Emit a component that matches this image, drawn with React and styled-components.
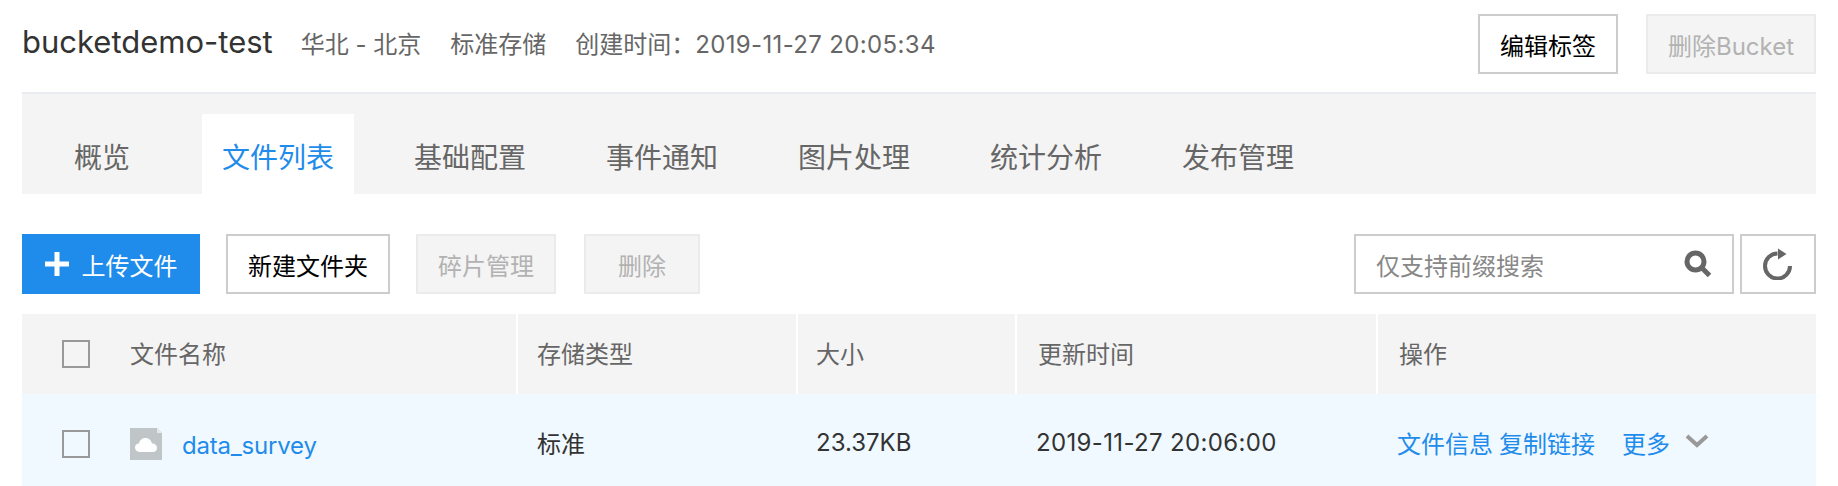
import React from 'react';
import styled, {createGlobalStyle} from "styled-components";

const GlobalStyle = createGlobalStyle`
  html, body {
    margin: 0;
    padding: 0;
    height: 486px;
    overflow: hidden;
    background: #fff;
  }

  body {
    font-family: "Inter", "Noto Sans CJK SC", sans-serif;
  }

  * {
    box-sizing: border-box;
  }
`;

const Page = styled.div`
  padding: 0 22px;
  height: 486px;
  overflow: hidden;
`;

const Header = styled.header`
  display: flex;
  align-items: center;
  height: 94px;
  padding-bottom: 4px;
  border-bottom: 2px solid #e8ebf0;
`;

const Title = styled.h1`
  margin: 0 28px 6px 0;
  font-size: 31px;
  font-weight: 400;
  color: #333;
`;

const Meta = styled.span`
  margin: 0 29px 4px 0;
  font-size: 24px;
  color: #666;
`;

const Digits = styled.span`
  letter-spacing: 0.35px;
`;

const Spacer = styled.div`
  flex: 1;
`;

const Button = styled.button`
  display: inline-flex;
  align-items: center;
  justify-content: center;
  height: 60px;
  width: ${({width}) => width}px;
  margin-left: ${({gap}) => gap || 0}px;
  padding: 0;
  font: inherit;
  font-size: 24px;
  color: #000;
  background: #fff;
  border: 2px solid #ccc;
  border-radius: 0;

  &:disabled {
    color: #b2b2b2;
    background: #f4f4f4;
    border-color: #ebebeb;
  }
`;

const PrimaryButton = styled(Button)`
  gap: 13px;
  color: #fff;
  background: #1f8ceb;
  border-color: #1f8ceb;
`;

const Tabs = styled.nav`
  display: flex;
  align-items: flex-end;
  height: 100px;
  padding-left: 32px;
  background: #f4f4f4;
`;

const Tab = styled.a`
  display: flex;
  align-items: center;
  justify-content: center;
  height: 80px;
  padding-top: 4px;
  width: ${({first}) => first ? '96px' : '152px'};
  margin-right: ${({first}) => first ? '52px' : '40px'};
  font-size: 28px;
  color: ${({active}) => active ? '#1f8ceb' : '#666'};
  background: ${({active}) => active ? '#fff' : 'transparent'};
`;

const Toolbar = styled.div`
  display: flex;
  align-items: center;
  height: 60px;
  margin: 40px 0 20px;
`;

const SearchBox = styled.div`
  display: flex;
  align-items: center;
  justify-content: space-between;
  width: 380px;
  height: 60px;
  padding: 0 20px;
  font-size: 24px;
  color: #888;
  border: 2px solid #ccc;
`;

const TableRow = styled.div`
  display: grid;
  grid-template-columns: 496px 280px 219px 361px 1fr;
  height: ${({head}) => head ? '80px' : '92px'};
  background: ${({head}) => head ? '#f4f4f4' : '#f0f9ff'};
  font-size: 24px;
  color: ${({head}) => head ? '#666' : '#333'};
`;

const HeadCell = styled.div`
  display: flex;
  align-items: center;
  padding: 0 0 4px ${({pad}) => pad || 21}px;
  border-right: ${({last}) => last ? 'none' : '2px solid #fff'};
`;

const Cell = styled.div`
  display: flex;
  align-items: center;
  padding: 5px 0 0 ${({pad}) => pad || 19}px;
`;

const HeadName = styled(HeadCell)`
  padding-left: 40px;
`;

const NameCell = styled(Cell)`
  padding: 8px 0 0 40px;
`;

const Checkbox = styled.span`
  display: inline-block;
  flex: none;
  width: 28px;
  height: 28px;
  margin-right: 40px;
  border: 2px solid #999;
  position: relative;
  top: ${({head}) => head ? '2px' : '0'};
`;

const Link = styled.a`
  color: #1f8ceb;
  margin-right: ${({gap}) => gap || 0}px;
`;

const FileName = styled(Link)`
  margin: 2px 0 0 20px;
  letter-spacing: -0.2px;
`;

const Chevron = styled.svg`
  margin: 0 0 4px 15px;
`;

const FileIcon = () => (
    <svg width="32" height="32" viewBox="0 0 32 32">
        <path d="M0 0H27L32 5V32H0Z" fill="#c0c5c8"/>
        <path d="M27 0L32 5H27Z" fill="#e6e9eb"/>
        <path d="M10 24C6 24 5 21 5 19.500C5 17 7 15.500 9 15.500C9.500 12 12.500 10 15.500 10C19 10 21.500 12.500 22 15.500C25 15.500 27 17.500 27 20C27 22.500 25 24 23 24Z" fill="#fff"/>
    </svg>
);

const App = () => {
    return (
        <Page>
            <GlobalStyle/>
            <Header>
                <Title>bucketdemo-test</Title>
                <Meta>华北 - 北京</Meta>
                <Meta>标准存储</Meta>
                <Meta>创建时间：<Digits>2019-11-27 20:05:34</Digits></Meta>
                <Spacer/>
                <Button width={140}>编辑标签</Button>
                <Button width={170} gap={28} disabled>删除Bucket</Button>
            </Header>

            <Tabs>
                <Tab first>概览</Tab>
                <Tab active>文件列表</Tab>
                <Tab>基础配置</Tab>
                <Tab>事件通知</Tab>
                <Tab>图片处理</Tab>
                <Tab>统计分析</Tab>
                <Tab>发布管理</Tab>
            </Tabs>

            <Toolbar>
                <PrimaryButton width={178}>
                    <svg width="24" height="24" viewBox="0 0 24 24">
                        <path d="M12 0V24M0 12H24" stroke="#fff" strokeWidth="5"/>
                    </svg>
                    上传文件
                </PrimaryButton>
                <Button width={164} gap={26}>新建文件夹</Button>
                <Button width={140} gap={26} disabled>碎片管理</Button>
                <Button width={116} gap={28} disabled>删除</Button>
                <Spacer/>
                <SearchBox>
                    仅支持前缀搜索
                    <svg width="28" height="28" viewBox="0 0 28 28">
                        <circle cx="11.500" cy="11.500" r="8.500" fill="none" stroke="#666" strokeWidth="5"/>
                        <path d="M17.500 17.500L25.500 25.500" stroke="#666" strokeWidth="5"/>
                    </svg>
                </SearchBox>
                <Button width={76} gap={6}>
                    <svg width="30" height="32" viewBox="0 0 30 32">
                        <path d="M27 18A12.500 12.500 0 1 1 14.500 5.500" fill="none" stroke="#666" strokeWidth="4"/>
                        <path d="M15 0.500L23.500 6L15 11.500Z" fill="#666"/>
                    </svg>
                </Button>
            </Toolbar>

            <TableRow head>
                <HeadName><Checkbox head/>文件名称</HeadName>
                <HeadCell pad={19}>存储类型</HeadCell>
                <HeadCell pad={18}>大小</HeadCell>
                <HeadCell>更新时间</HeadCell>
                <HeadCell last>操作</HeadCell>
            </TableRow>
            <TableRow>
                <NameCell><Checkbox/><FileIcon/><FileName>data_survey</FileName></NameCell>
                <Cell>标准</Cell>
                <Cell pad={18}>23.37KB</Cell>
                <Cell>
                    <Digits>2019-11-27 20:06:00</Digits>
                </Cell>
                <Cell>
                    <Link gap={6}>文件信息</Link>
                    <Link gap={27}>复制链接</Link>
                    <Link>更多</Link>
                    <Chevron width="24" height="14" viewBox="0 0 24 14">
                        <path d="M2 2L12 11L22 2" fill="none" stroke="#999" strokeWidth="4"/>
                    </Chevron>
                </Cell>
            </TableRow>
        </Page>
    );
};

export default App;
